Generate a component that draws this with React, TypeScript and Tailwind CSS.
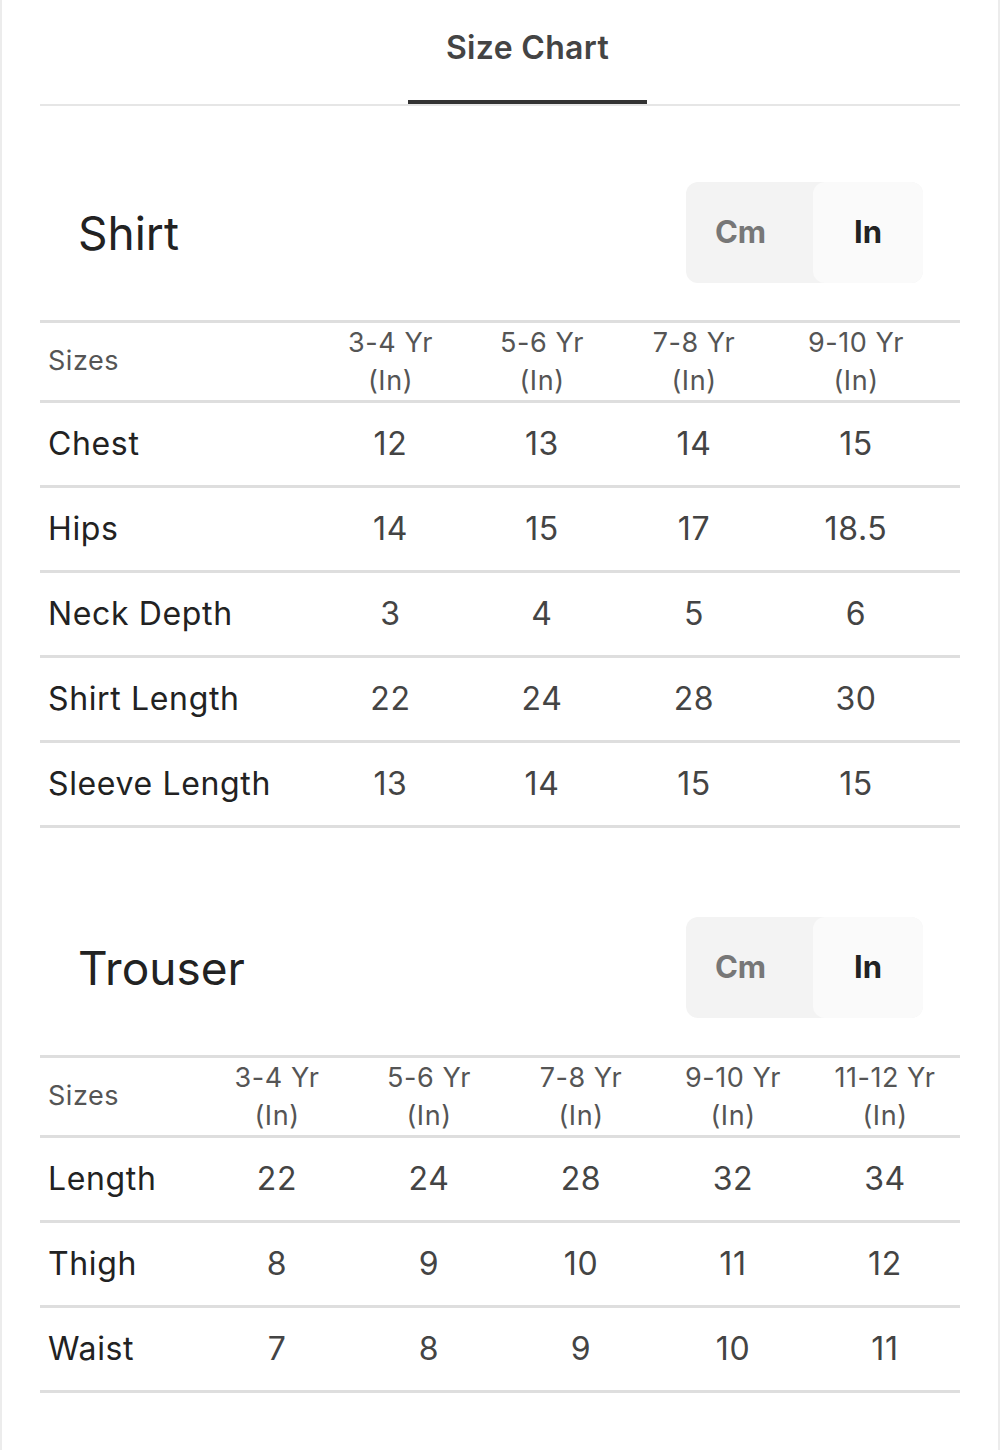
import React from 'react';

type Row = { label: string; values: string[] };

const shirtSizes = ['3-4 Yr', '5-6 Yr', '7-8 Yr', '9-10 Yr'];
const shirtRows: Row[] = [
  { label: 'Chest', values: ['12', '13', '14', '15'] },
  { label: 'Hips', values: ['14', '15', '17', '18.5'] },
  { label: 'Neck Depth', values: ['3', '4', '5', '6'] },
  { label: 'Shirt Length', values: ['22', '24', '28', '30'] },
  { label: 'Sleeve Length', values: ['13', '14', '15', '15'] },
];

const trouserSizes = ['3-4 Yr', '5-6 Yr', '7-8 Yr', '9-10 Yr', '11-12 Yr'];
const trouserRows: Row[] = [
  { label: 'Length', values: ['22', '24', '28', '32', '34'] },
  { label: 'Thigh', values: ['8', '9', '10', '11', '12'] },
  { label: 'Waist', values: ['7', '8', '9', '10', '11'] },
];

function UnitToggle() {
  return (
    <div className="flex w-[237px] h-[101px] rounded-[12px] bg-[#f3f3f3]">
      <button className="w-[127px] pr-[18px] flex items-center justify-center text-[31px] font-bold text-[#777]">
        Cm
      </button>
      <button className="flex-1 flex items-center justify-center rounded-[12px] bg-[#fafafa] text-[31px] font-bold text-[#222]">
        In
      </button>
    </div>
  );
}

function SizeTable({
  title,
  sizes,
  rows,
  cols,
}: {
  title: string;
  sizes: string[];
  rows: Row[];
  cols: string;
}) {
  return (
    <section>
      {/* heading + unit switch */}
      <div className="flex items-center justify-between h-[101px] pl-[38px] pr-[37px]">
        <h2 className="text-[46px] text-[#222] leading-none">{title}</h2>
        <UnitToggle />
      </div>

      <div className="mt-[37px] border-t-[3px] border-[#dedede]">
        <div className={`grid ${cols} h-[80px] items-center border-b-[3px] border-[#dedede]`}>
          <div className="pl-[8px] text-[27px] tracking-[0.02em] text-[#555]">Sizes</div>
          {sizes.map((s) => (
            <div key={s} className="text-center text-[27px] tracking-[0.02em] leading-[38px] text-[#555]">
              <div>{s}</div>
              <div>(In)</div>
            </div>
          ))}
        </div>
        {rows.map((r) => (
          <div
            key={r.label}
            className={`grid ${cols} h-[85px] items-center border-b-[3px] border-[#dedede]`}
          >
            <div className="pl-[8px] text-[32px] tracking-[0.02em] text-[#222]">{r.label}</div>
            {r.values.map((v, i) => (
              <div key={i} className="text-center text-[32px] tracking-[0.02em] text-[#444]">
                {v}
              </div>
            ))}
          </div>
        ))}
      </div>
    </section>
  );
}

export default function App() {
  return (
    <div className="min-h-[1450px] bg-white border-x-2 border-[#ececec] font-['Inter',sans-serif]">
      <div className="px-[38px]">
        {/* Tabs */}
        <div className="border-b-2 border-[#e6e6e6]">
          <div className="ml-[368px] w-[239px] h-[104px] border-b-4 border-[#333] pt-[29px] text-center">
            <span className="text-[32px] leading-[38px] font-semibold tracking-[0.01em] text-[#444]">
              Size Chart
            </span>
          </div>
        </div>

        <div className="mt-[76px]">
          <SizeTable
            title="Shirt"
            sizes={shirtSizes}
            rows={shirtRows}
            cols="grid-cols-[275px_151px_152px_152px_172px]"
          />
        </div>

        <div className="mt-[89px]">
          <SizeTable
            title="Trouser"
            sizes={trouserSizes}
            rows={trouserRows}
            cols="grid-cols-[161px_152px_152px_152px_152px_152px]"
          />
        </div>
      </div>
    </div>
  );
}
